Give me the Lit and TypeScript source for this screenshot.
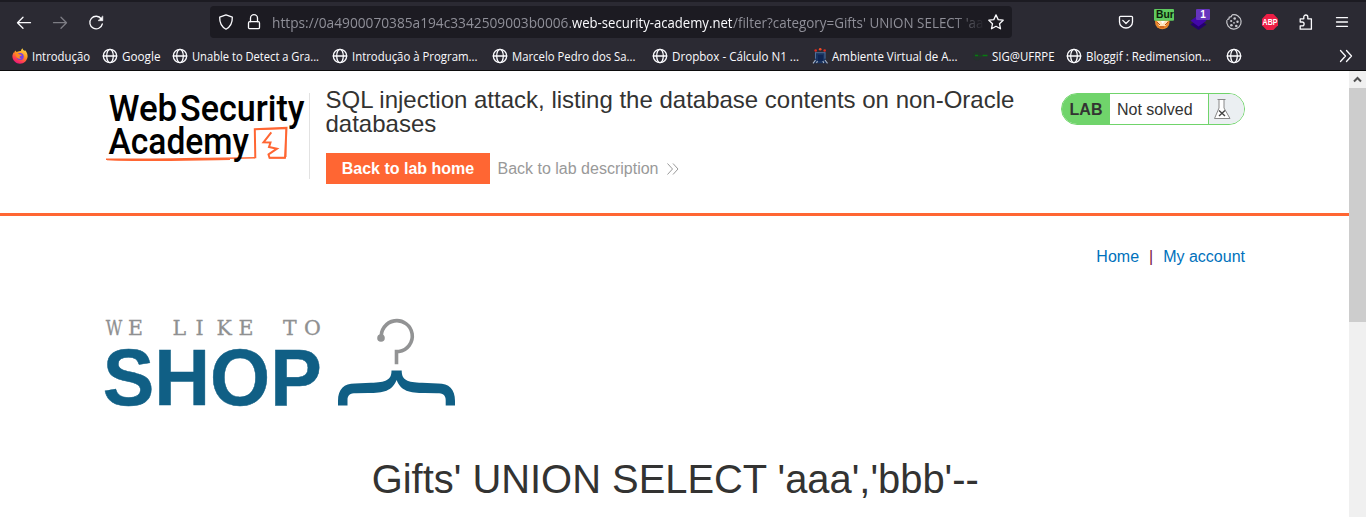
import { LitElement, html, svg, css } from "lit";
import { customElement } from "lit/decorators.js";

type Icon = "fox" | "globe" | "ava" | "sig";
interface Bookmark { icon: Icon; label: string; text: number; width: number; }

// width: full pitch of the item; text: drawn width of the label
const BOOKMARKS: Bookmark[] = [
  { icon: "fox", label: "Introdução", text: 58, width: 90.5 },
  { icon: "globe", label: "Google", text: 38.5, width: 70 },
  { icon: "globe", label: "Unable to Detect a Gra...", text: 127, width: 160 },
  { icon: "globe", label: "Introdução à Program...", text: 125.5, width: 160 },
  { icon: "globe", label: "Marcelo Pedro dos Sa...", text: 123.5, width: 160 },
  { icon: "globe", label: "Dropbox - Cálculo N1 ...", text: 127, width: 160 },
  { icon: "ava", label: "Ambiente Virtual de A...", text: 125.5, width: 159.5 },
  { icon: "sig", label: "SIG@UFRPE", text: 62.5, width: 94.5 },
  { icon: "globe", label: "Bloggif : Redimension...", text: 125, width: 160 },
  { icon: "globe", label: "", text: 0, width: 20 },
];

const line = (w: number, label: string, cls: string, baseline: number) => html`
  <svg class="run" width=${w} height="20"><text class=${cls} x="0" y=${baseline} textLength=${w} lengthAdjust="spacingAndGlyphs">${label}</text></svg>`;

const ic = (body: unknown, cls = "") => html`<svg class="ic ${cls}" width="16" height="16" viewBox="0 0 16 16">${body}</svg>`;

const GLYPHS: Record<Icon, unknown> = {
  globe: svg`<g class="ln"><circle cx="8" cy="8" r="6.7"/><ellipse cx="8" cy="8" rx="3.3" ry="6.7"/><path d="M1.3 8h13.4"/></g>`,
  fox: svg`<defs>
      <linearGradient id="fx" x1=".8" y1="0" x2=".3" y2="1"><stop offset="0" stop-color="#ffe14a"/><stop offset=".45" stop-color="#ff9320"/><stop offset=".75" stop-color="#ff4050"/><stop offset="1" stop-color="#e5127f"/></linearGradient></defs>
    <path fill="url(#fx)" d="M3.2 2.4 4.6 4 6 3.6C7 2.9 8 2.8 9 3 9 2 9.600 1 10.400.2c.5 1.400 1.300 2 2.200 2.900.2-.5.2-.8.2-1.200C15 4 15.700 6.200 15.600 8.500 15.300 12.600 12 15.700 8 15.700S.5 12.500.4 8.500C.4 6.800 1 5.200 2 4.200c.2.2.3.3.4.6.1-1 .3-1.700.8-2.400z"/>
    <circle cx="8.200" cy="8.500" r="3.500" fill="#7542e5"/><path fill="#ff8a1f" d="M3.500 6.500c1.500-1 3-.9 4.500.1 1 0 1.600.2 1.700.6-.4.8-1.500.8-2 1.300-.4.9.3 1.700 1.500 1.700-2 1.300-5 .3-5.700-3.700z"/>`,
  ava: svg`<circle cx="3.700" cy="2.500" r="1.300" fill="#e02c22"/><circle cx="8.200" cy="1.300" r="1.300" fill="#f14a26"/><circle cx="12.700" cy="2.500" r="1.300" fill="#e02c22"/>
    <path d="M2.700 4.500h10.800V12l2 3.300H1L3 12z" fill="#19335f"/><path d="M3 4.700h10.500M3.500 4.700v6M13 4.700v6" stroke="#5f80aa" fill="none" stroke-width=".8"/><path d="M1 15.300 3.500 12M15.500 15.300 13 12M4.500 15l1-2M11.800 15l-1-2" stroke="#a9b4c5" fill="none" stroke-width="1.100"/><path d="M6 7h5v6H6z" fill="#102552"/>`,
  sig: svg`<circle cx="5" cy="8" r="4.500" fill="#25302d"/><path d="M3 7.500h3M10.500 7.500h5" stroke="#087b11" stroke-width="1.700"/><path d="M6 8h5" stroke="#174d1d"/>`,
};

@customElement("browser-chrome")
export class BrowserChrome extends LitElement {
  static styles = css`
    :host { display: block; background: #2b2a33; border-top: 2px solid #1c1b22; border-bottom: 1px solid #0c0c0d; box-sizing: border-box; height: 71px; }
    .bar { display: flex; align-items: center; height: 40px; padding-left: 16px; }
    .nav, .ext { display: flex; align-items: center; gap: 20px; }
    .ext { margin-left: 106px; }
    .url { display: flex; align-items: center; box-sizing: border-box; width: 802px; height: 32px; margin-left: 106px; padding-left: 8px; border-radius: 4px; background: #1c1b22; }
    .lock { margin-left: 12px; }
    .addr { display: flex; width: 711px; height: 20px; margin: 1px 5px 0 10px; overflow: hidden; mask-image: linear-gradient(to right, #000 682px, transparent 713px); }
    .run { display: block; flex: none; overflow: visible; }
    .dim, .host { font: 14.500px "Open Sans", "Noto Sans", sans-serif; fill: #8f8f98; }
    .host { fill: #fbfbfe; }
    .marks { display: flex; align-items: center; height: 28px; padding-left: 11.500px; }
    .mark { display: flex; align-items: center; gap: 4px; flex: none; }
    .label { font: 12px "Open Sans", "Noto Sans", sans-serif; fill: #fbfbfe; }
    .ic { display: block; flex: none; overflow: visible; }
    .ln, .ic.stroke { fill: none; stroke: #fbfbfe; stroke-width: 1.300; stroke-linecap: round; stroke-linejoin: round; }
    .off { opacity: .4; }
    .more { margin-left: 91.500px; }
    .tag { font: bold 10px "Liberation Sans", sans-serif; fill: #0b1d08; }
    .count { font: bold 10px "Liberation Sans", sans-serif; fill: #fff; }
    .abp { font: bold 8.500px "Liberation Sans", sans-serif; fill: #fff; }
  `;
  render() {
    return html`
      <div class="bar">
        <div class="nav">
          ${ic(svg`<path d="M1.500 8.700H14.500M7 3.200 1.500 8.700 7 14.200"/>`, "stroke")}
          ${ic(svg`<path d="M1.500 8.700H14.500M9 3.200l5.500 5.500L9 14.200"/>`, "stroke off")}
          ${ic(svg`<path d="M13.300 4.900A6.300 6.300 0 1 0 14.300 10"/><path d="M14.800 2.300v4.400h-4.400z" fill="#fbfbfe" stroke-width=".6"/>`, "stroke")}
        </div>
        <div class="url">
          ${ic(svg`<path d="M8 .9 14.300 3.200C14.500 9 12 13 8 15.200 4 13 1.500 9 1.700 3.200z"/>`, "stroke")}
          ${ic(svg`<path d="M4.500 7.700V4.200a3.500 3.500 0 0 1 7 0v3.500"/><rect x="2.500" y="7.700" width="11" height="7" rx="1.300"/>`, "stroke lock")}
          <div class="addr">
            ${line(300, "https://0a4900070385a194c3342509003b0006.", "dim", 15)}
            ${line(160.5, "web-security-academy.net", "host", 15)}
            ${line(250.5, "/filter?category=Gifts' UNION SELECT 'aa", "dim", 15)}
          </div>
          ${ic(svg`<path d="m8 .9 2.200 4.700 5 .6-3.700 3.500 1 5.100L8 12.300l-4.500 2.500 1-5.100L.8 6.200l5-.6z"/>`, "stroke")}
        </div>
        <div class="ext">
          ${ic(svg`<path d="M2.500 2.300h11a1 1 0 0 1 1 1V8a6.500 6 0 0 1-13 0V3.300a1 1 0 0 1 1-1zM4.800 6.400 8 9.500l3.200-3.100"/>`, "stroke")}
          ${ic(svg`<circle cx="8.300" cy="8" r="7.300" fill="#e8872c"/><path d="M3 7h11l-2.500 5H5z" fill="#ffe2b8"/><path d="M3 8l3 3M14 8l-3 3M6 13h4" stroke="#bd4f12" fill="none"/><path d="M7 7l1.500 3L11 7" fill="#fff"/>
            <rect x="0" y="-5" width="20" height="11.700" rx="1" fill="#5fca5f"/><svg x="0" y="-5" width="20" height="12"><text class="tag" x="2" y="9" textLength="24" lengthAdjust="spacingAndGlyphs">Burp</text></svg>`)}
          ${ic(svg`<path d="M8.500 5 16.500 10.500 8.500 16 .5 10.500z" fill="#24006d"/><path d="M8.500 1 16.500 6.800 8.500 12.500.5 6.800z" fill="#4207a8"/><rect x="6" y="-5" width="14" height="11" rx="1" fill="#6635bd"/><text class="count" x="10.300" y="4.200">1</text>`)}
          ${ic(svg`<g fill="none" stroke="#c9c9ce" stroke-width="1.200"><path d="M6 .9A7.200 7.200 0 1 1 .9 6.200"/><path d="M1.200 5.600 3 4.900 3.200 3.200 5.200 2.700 6 .9"/></g><g fill="#c9c9ce"><circle cx="8.700" cy="4.500" r="1.300"/><circle cx="5.200" cy="7" r="1.100"/><circle cx="11.500" cy="7.700" r="1.200"/><circle cx="8" cy="8.800" r=".9"/><circle cx="5.400" cy="11.200" r="1.300"/><circle cx="10.300" cy="12" r="1.300"/></g>`)}
          ${ic(svg`<path d="M4.700 0h6.600L16 4.700v6.600L11.300 16H4.700L0 11.300V4.700z" fill="#ed1e45"/><text class="abp" x=".6" y="11.100" textLength="14.800" lengthAdjust="spacingAndGlyphs">ABP</text>`)}
          ${ic(svg`<path d="M2.200 4.800h3.600V3a2 2 0 0 1 4 0v1.800h3.600v10.400H2.200v-3.400h2a1.900 1.900 0 0 0 0-3.800h-2z"/>`, "stroke")}
          ${ic(svg`<path d="M2.500 3.700h11M2.500 8h11M2.500 12.300h11"/>`, "stroke")}
        </div>
      </div>
      <div class="marks">
        ${BOOKMARKS.map((b) => html`<div class="mark" style="width:${b.width}px">${ic(GLYPHS[b.icon])}${b.label ? line(b.text, b.label, "label", 14.5) : ""}</div>`)}
        ${ic(svg`<path d="M2.500 2.500 7.500 8 2.500 13.500M8.500 2.500 13.500 8 8.500 13.500"/>`, "stroke more")}
      </div>`;
  }
}

@customElement("app-root")
export class AppRoot extends LitElement {
  static styles = css`
    :host { display: flex; flex-direction: column; width: 1366px; height: 517px; overflow: hidden; background: #fff; color: #333332; font: 16px/24px "Liberation Sans", Arial, sans-serif; }
    .view { display: flex; flex: 1; min-height: 0; }
    .page { flex: 1; min-width: 0; }
    .track { width: 17px; background: #f0f0f0; }
    .up { display: block; }
    .thumb { height: 234px; background: #cdcdcd; }
    .head { display: flex; box-sizing: border-box; height: 145px; padding: 22px 104px 0 105px; border-bottom: 3px solid #ff6633; }
    .logo { display: block; flex: none; overflow: visible; }
    .brand { font: 500 37px Roboto, sans-serif; fill: #000; }
    .titles { box-sizing: border-box; height: 86px; width: 751px; padding-left: 16px; margin-left: 4px; border-left: 1px solid #e2e2e2; }
    .title { margin: -5px 0 17px -.5px; font-size: 24px; line-height: 24px; font-weight: 400; }
    .acts { display: flex; align-items: center; gap: 7.500px; color: #999; }
    .btn { box-sizing: border-box; width: 164px; height: 31px; line-height: 31px; background: #ff6633; color: #fff; font-weight: 700; text-align: center; }
    .desc { display: flex; align-items: center; gap: 8.500px; }
    .status { display: flex; box-sizing: border-box; width: 184px; height: 32px; margin-left: auto; border: 1px solid #70d46b; border-radius: 16px; overflow: hidden; line-height: 31px; }
    .lab { width: 48px; background: #70d46b; font-weight: 700; text-align: center; }
    .state { flex: 1; padding-left: 7px; }
    .flask { width: 35px; border-left: 1px solid #70d46b; background: #ebeff2; }
    .links { display: flex; justify-content: flex-end; gap: 10px; padding: 29px 104px 0 0; color: #0071bc; }
    .sep { color: #7a1743; }
    .shop { display: block; margin: 47px 0 0 105px; overflow: visible; }
    .like { font: 20.500px "DejaVu Serif", serif; fill: #8f9091; stroke: #8f9091; stroke-width: .3; }
    .word { font: bold 79px "Liberation Sans", sans-serif; fill: #105f85; stroke: #105f85; stroke-width: .5; }
    .query { margin: 47px 0 0; padding-left: 1.500px; text-align: center; font-size: 39.900px; line-height: 48px; font-weight: 400; }
  `;
  render() {
    return html`
      <browser-chrome></browser-chrome>
      <div class="view">
        <main class="page">
          <header class="head">
            <svg class="logo" width="200" height="86" viewBox="105 93 200 86">
              <path d="M106 159.300C140 159.800 200 158.300 255 157.700M107 159.800C150 161 190 159.700 230 159.200" fill="none" stroke="#ff6633" stroke-width="1.600"/>
              <path d="M255.300 158.300 254.800 129.300 286.500 127.900 285 157.700 269.500 157.700 268.500 154.500 277 148.700 269 147 270.500 142.500 263.500 142.300 271.300 132.300" fill="none" stroke="#ff6633" stroke-width="2"/>
              <path d="M254 129.500 286 128.500M286 129 286 157M269 158 285 158" fill="none" stroke="#ff6633"/>
              <text class="brand" x="108.700" y="121.300" textLength="68.500" lengthAdjust="spacingAndGlyphs">Web</text>
              <text class="brand" x="180" y="121.300" textLength="124.500" lengthAdjust="spacingAndGlyphs">Security</text>
              <text class="brand" x="108.500" y="153.800" textLength="140.500" lengthAdjust="spacingAndGlyphs">Academy</text>
            </svg>
            <section class="titles">
              <h2 class="title">SQL injection attack, listing the database contents on non-Oracle databases</h2>
              <div class="acts">
                <a class="btn">Back to lab home</a>
                <a class="desc">Back to lab description
                  <svg width="12" height="12" viewBox="0 0 12 12"><path d="M.5.500 5.500 6 .5 11.500M6 .5 11 6 6 11.500" fill="none" stroke="#999"/></svg>
                </a>
              </div>
            </section>
            <div class="status">
              <span class="lab">LAB</span><span class="state">Not solved</span>
              <span class="flask"><svg class="logo" width="28" height="30" viewBox="0 0 28 30">
                <path d="M8.500 5.500h8M10 6v8L5.500 24.500h15.500L15 14V6" fill="#fff" stroke="#888"/><path d="m10 16.500 6 5.500m0-5.500-6 5.500" stroke="#444" stroke-width="1.400"/></svg></span>
            </div>
          </header>
          <nav class="links"><a>Home</a><span class="sep">|</span><a>My account</a></nav>
          <svg class="shop" width="352" height="92" viewBox="105 316 352 92">
            <text class="like" y="335" x="105.700" textLength="16.500" lengthAdjust="spacingAndGlyphs">W</text>
            <text class="like" y="335" x="128 150 172.500 195.500 216.500 238.500 260 283 304">E LIKE TO</text>
            <text class="word" x="102.700" y="405.300" textLength="219" lengthAdjust="spacingAndGlyphs">SHOP</text>
            <path d="M381.500 338A15.500 15.500 0 1 1 399 350.800H396.500V363.500" transform="translate(0 .7)" fill="none" stroke="#929394" stroke-width="3.600"/><circle cx="381" cy="338" r="3.800" fill="#929394"/>
            <path d="M338 405.500V401C338 389 344 383.500 355 383.500L371 382.700C386 382.500 391.500 380 391.500 370.500H401.700C401.700 380 407 382.500 422 382.700L438 383.500C449 383.500 455 389 455 401V405.500H445.700V400C445.700 395 443 393.200 437 393.200L425 393C409 393 401 391 396.600 380 392 391 384 393 368 393L356 393.200C350 393.200 347.500 395 347.500 400V405.500Z" fill="#105f85"/>
          </svg>
          <h1 class="query">Gifts' UNION SELECT 'aaa','bbb'--</h1>
        </main>
        <div class="track">
          <svg class="up" width="17" height="17" viewBox="0 0 17 17"><path d="m5 10.500 3.500-3.500 3.500 3.500" fill="none" stroke="#505050" stroke-width="2"/></svg>
          <div class="thumb"></div>
        </div>
      </div>`;
  }
}
